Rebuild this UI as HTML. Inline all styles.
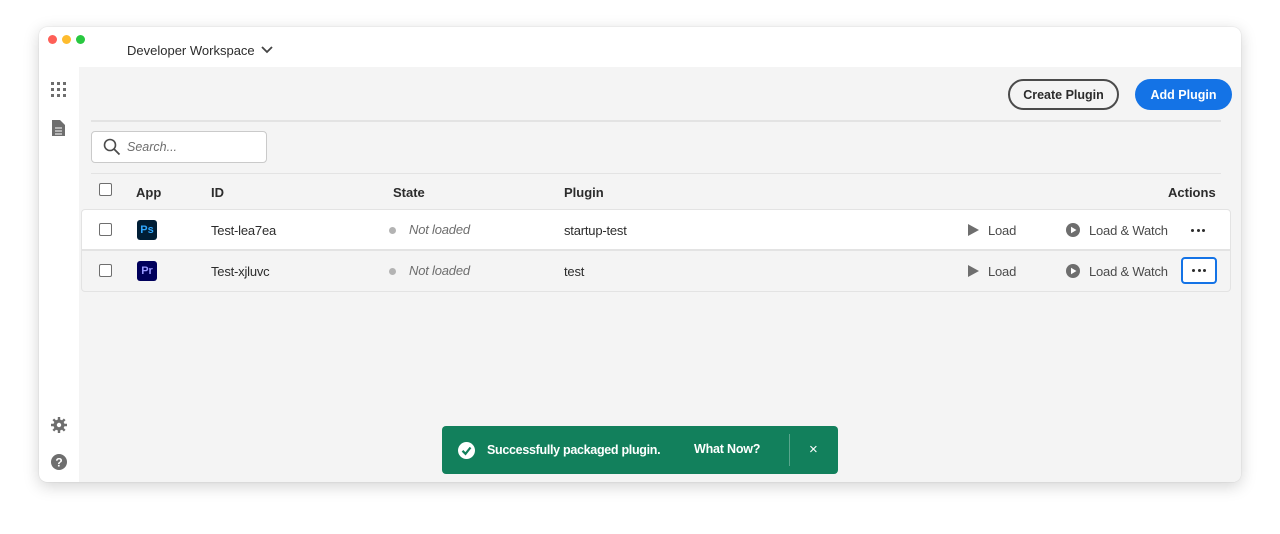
<!DOCTYPE html>
<html><head><style>
*{margin:0;padding:0;box-sizing:border-box}
body{width:1280px;height:534px;background:#fff;font-family:"Liberation Sans",sans-serif;position:relative;overflow:hidden;color:#2c2c2c}
.win{position:absolute;left:39px;top:27px;width:1202px;height:455px;background:#fff;border-radius:8px;box-shadow:0 4px 16px rgba(0,0,0,.18),0 0 1px rgba(0,0,0,.2);overflow:hidden}
.dot{position:absolute;top:8px;width:9px;height:9px;border-radius:50%}
.content{position:absolute;left:40px;top:40px;right:0;bottom:0;background:#f4f4f4}
.abs{position:absolute}
.btn{position:absolute;height:31px;border-radius:16px;font-size:12.5px;font-weight:bold;display:flex;align-items:center;justify-content:center}
.hr{position:absolute;height:2px;background:#e3e3e3}
.th{position:absolute;font-size:13px;font-weight:bold;top:118px;color:#2c2c2c}
.cb{position:absolute;width:13px;height:13px;border:1.5px solid #6e6e6e;border-radius:2px;background:#fff}
.row{position:absolute;left:2px;width:1150px;height:41px;border:1px solid #e3e3e3}
.t{position:absolute;font-size:13px;color:#2c2c2c;letter-spacing:-0.2px}
.it{font-style:italic;color:#6e6e6e}
.gd{position:absolute;width:7px;height:7px;border-radius:50%;background:#b3b3b3}
.app{position:absolute;width:20px;height:20px;border-radius:3px;font-size:11px;font-weight:bold;display:flex;align-items:center;justify-content:center}
.dots{position:absolute;display:flex;gap:2.5px}
.dots i{width:3px;height:3px;border-radius:50%;background:#2c2c2c;display:block}
</style></head><body>
<div class="win">
 <div class="dot" style="left:9px;background:#fe5f57"></div>
 <div class="dot" style="left:23px;background:#febc2e"></div>
 <div class="dot" style="left:37px;background:#28c840"></div>
 <div class="abs" style="left:88px;top:16px;font-size:13px;color:#2c2c2c">Developer Workspace</div>
 <svg class="abs" style="left:222px;top:19px" width="12" height="8"><path d="M1 1L6 6L11 1" fill="none" stroke="#444" stroke-width="1.8"/></svg>
 <svg class="abs" style="left:12px;top:55px" width="16" height="16" fill="#6e6e6e">
  <rect x="0" y="0" width="3" height="3"/><rect x="6" y="0" width="3" height="3"/><rect x="12" y="0" width="3" height="3"/>
  <rect x="0" y="6" width="3" height="3"/><rect x="6" y="6" width="3" height="3"/><rect x="12" y="6" width="3" height="3"/>
  <rect x="0" y="12" width="3" height="3"/><rect x="6" y="12" width="3" height="3"/><rect x="12" y="12" width="3" height="3"/></svg>
 <svg class="abs" style="left:13px;top:93px" width="13" height="16"><path d="M0 0H8L13 5V16H0Z" fill="#6e6e6e"/><path d="M3 8H10M3 11H10M3 14H10" stroke="#fff" stroke-width="1"/></svg>
 <svg class="abs" style="left:12px;top:390px" width="16" height="16"><circle cx="8" cy="8" r="5.5" fill="#6e6e6e"/><path d="M8 0V16M0 8H16M2.3 2.3L13.7 13.7M13.7 2.3L2.3 13.7" stroke="#6e6e6e" stroke-width="2.4"/><circle cx="8" cy="8" r="2.2" fill="#fff"/></svg>
 <svg class="abs" style="left:12px;top:427px" width="16" height="16"><circle cx="8" cy="8" r="8" fill="#6e6e6e"/><text x="8" y="12.5" font-size="12" font-weight="bold" fill="#fff" text-anchor="middle" font-family="Liberation Sans">?</text></svg>
 <div class="content">
  <div class="btn" style="left:929px;top:12px;width:111px;border:2px solid #4b4b4b;color:#2c2c2c">Create Plugin</div>
  <div class="btn" style="left:1056px;top:12px;width:97px;background:#1473e6;color:#fff">Add Plugin</div>
  <div class="hr" style="left:12px;top:53px;width:1130px"></div>
  <div class="abs" style="left:12px;top:64px;width:176px;height:32px;border:1px solid #cacaca;border-radius:4px;background:#fff"></div>
  <svg class="abs" style="left:24px;top:71px" width="18" height="18"><circle cx="7" cy="7" r="5.5" fill="none" stroke="#4b4b4b" stroke-width="1.6"/><path d="M11 11L16.5 16.5" stroke="#4b4b4b" stroke-width="1.8"/></svg>
  <div class="abs it" style="left:48px;top:73px;font-size:12.5px">Search...</div>
  <div class="hr" style="left:12px;top:106px;width:1130px;height:1px"></div>
  <div class="cb" style="left:20px;top:116px"></div>
  <div class="th" style="left:57px">App</div>
  <div class="th" style="left:132px">ID</div>
  <div class="th" style="left:314px">State</div>
  <div class="th" style="left:485px">Plugin</div>
  <div class="th" style="left:1089px">Actions</div>
  <div class="row" style="top:142px;background:#fff;border-radius:4px 4px 0 0">
   <div class="cb" style="left:17px;top:13px"></div>
   <div class="app" style="left:55px;top:10px;background:#001e36;color:#31a8ff">Ps</div>
   <div class="t" style="left:129px;top:13px">Test-lea7ea</div>
   <div class="gd" style="left:307px;top:17px"></div>
   <div class="t it" style="left:327px;top:12px">Not loaded</div>
   <div class="t" style="left:482px;top:13px">startup-test</div>
   <svg class="abs" style="left:886px;top:14px" width="12" height="12"><path d="M0 0L11 6L0 12Z" fill="#6e6e6e"/></svg>
   <div class="t" style="left:906px;top:13px;color:#4b4b4b">Load</div>
   <svg class="abs" style="left:984px;top:13px" width="14" height="14"><circle cx="7" cy="7" r="7" fill="#6e6e6e"/><path d="M5 3.8L10.5 7L5 10.2Z" fill="#fff"/></svg>
   <div class="t" style="left:1007px;top:13px;color:#4b4b4b">Load &amp; Watch</div>
   <div class="dots" style="left:1109px;top:19px"><i></i><i></i><i></i></div>
  </div>
  <div class="row" style="top:183px;background:#f4f4f4;border-radius:0 0 4px 4px;height:42px">
   <div class="cb" style="left:17px;top:13px"></div>
   <div class="app" style="left:55px;top:10px;background:#00005b;color:#9999ff">Pr</div>
   <div class="t" style="left:129px;top:13px">Test-xjluvc</div>
   <div class="gd" style="left:307px;top:17px"></div>
   <div class="t it" style="left:327px;top:12px">Not loaded</div>
   <div class="t" style="left:482px;top:13px">test</div>
   <svg class="abs" style="left:886px;top:14px" width="12" height="12"><path d="M0 0L11 6L0 12Z" fill="#6e6e6e"/></svg>
   <div class="t" style="left:906px;top:13px;color:#4b4b4b">Load</div>
   <svg class="abs" style="left:984px;top:13px" width="14" height="14"><circle cx="7" cy="7" r="7" fill="#6e6e6e"/><path d="M5 3.8L10.5 7L5 10.2Z" fill="#fff"/></svg>
   <div class="t" style="left:1007px;top:13px;color:#4b4b4b">Load &amp; Watch</div>
   <div class="abs" style="left:1099px;top:6px;width:36px;height:27px;border:2px solid #1473e6;border-radius:4px;background:#fff"></div>
   <div class="dots" style="left:1110px;top:18px"><i></i><i></i><i></i></div>
  </div>
  <div class="abs" style="left:363px;top:359px;width:396px;height:48px;background:#12805c;border-radius:4px;color:#fff">
   <svg class="abs" style="left:16px;top:16px" width="17" height="17"><circle cx="8.5" cy="8.5" r="8.5" fill="#fff"/><path d="M4.5 8.8L7.5 11.8L12.5 5.5" fill="none" stroke="#12805c" stroke-width="2.2"/></svg>
   <div class="abs" style="left:45px;top:17px;font-size:12.5px;font-weight:bold;letter-spacing:-0.3px">Successfully packaged plugin.</div>
   <div class="abs" style="left:252px;top:16px;font-size:12.5px;font-weight:bold;letter-spacing:-0.2px">What Now?</div>
   <div class="abs" style="left:347px;top:8px;width:1px;height:32px;background:rgba(255,255,255,.3)"></div>
   <div class="abs" style="left:367px;top:15px;font-size:15px">×</div>
  </div>
 </div>
</div>
</body></html>
